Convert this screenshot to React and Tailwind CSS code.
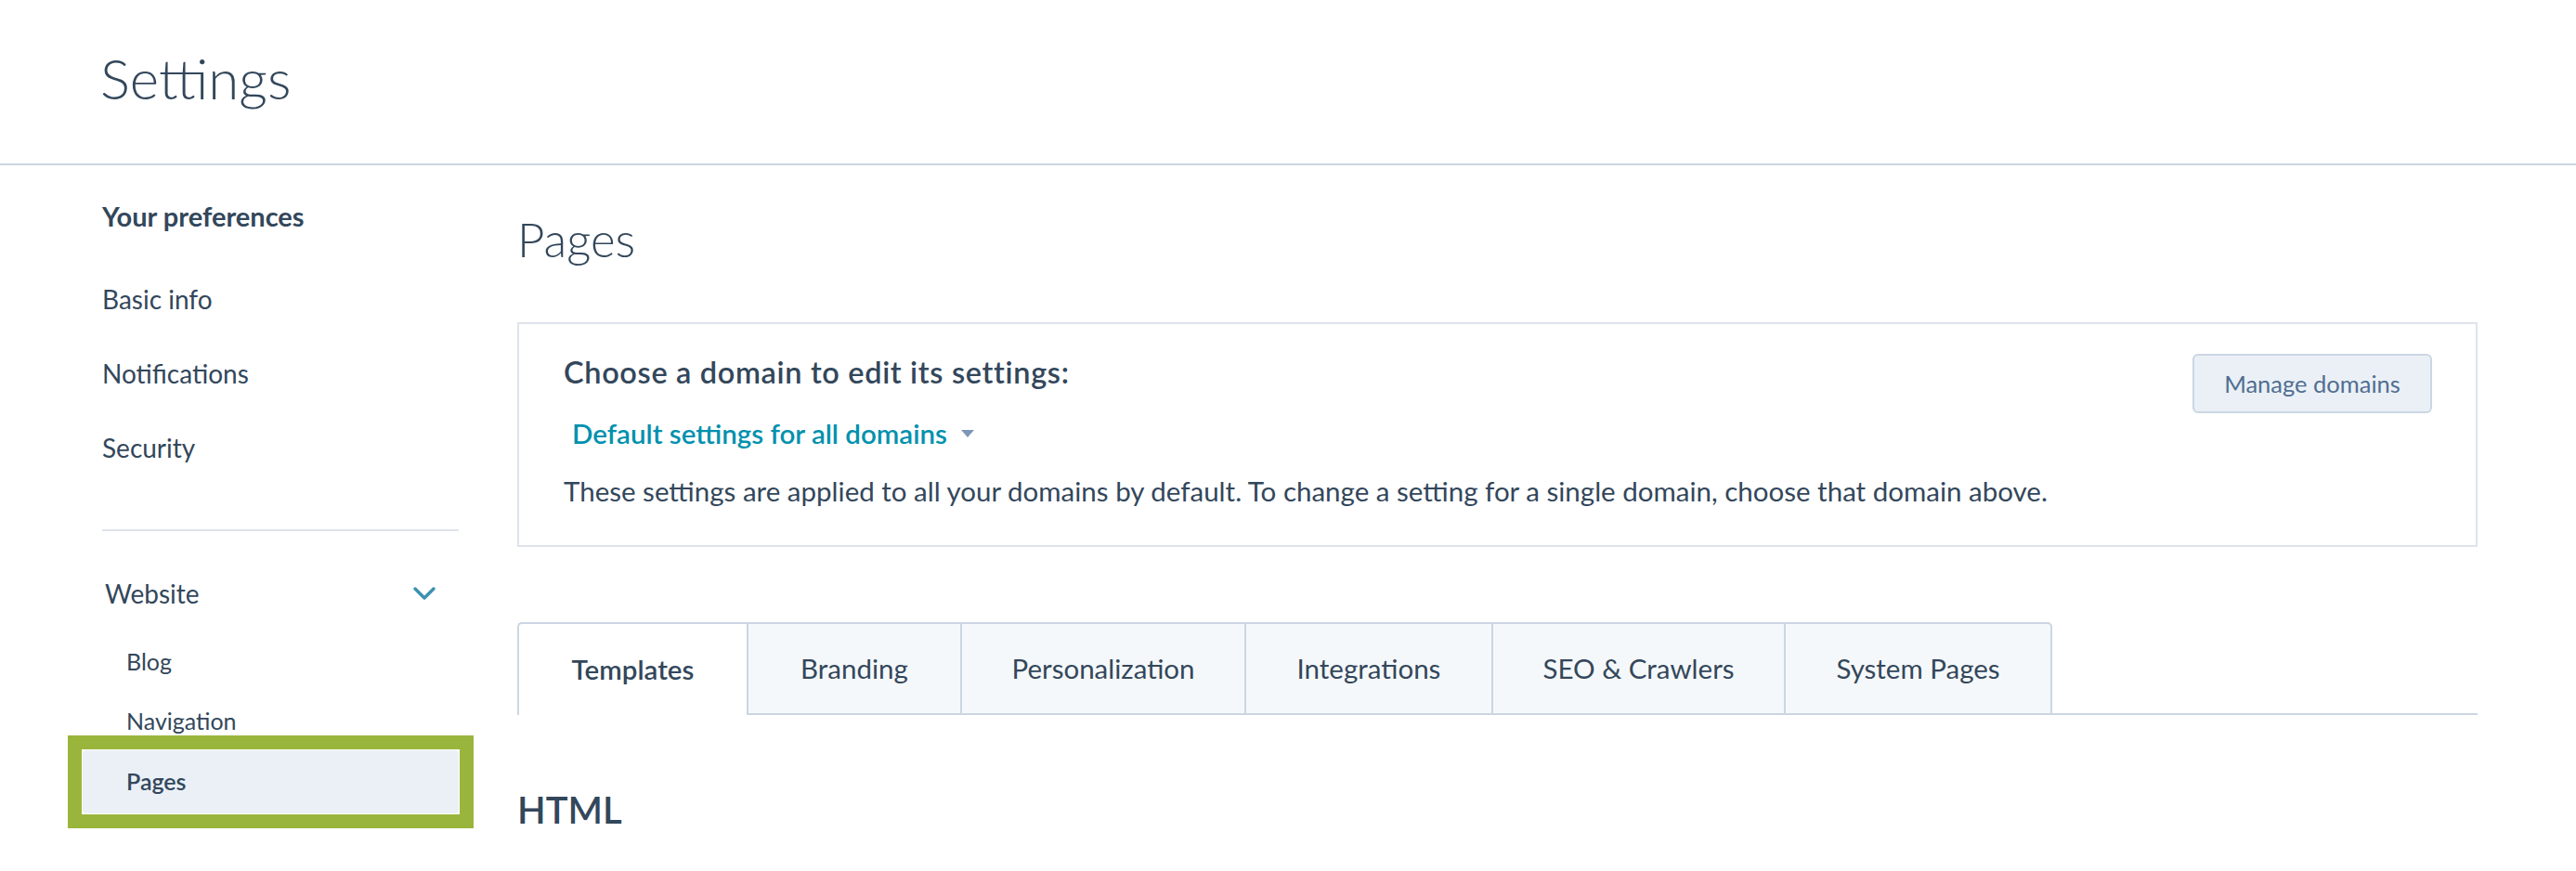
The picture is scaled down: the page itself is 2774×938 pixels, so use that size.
import React from 'react';

const tabs = [
  { label: 'Templates', w: 'w-[247px]', active: true },
  { label: 'Branding', w: 'w-[230px]' },
  { label: 'Personalization', w: 'w-[306px]' },
  { label: 'Integrations', w: 'w-[266px]' },
  { label: 'SEO & Crawlers', w: 'w-[315px]' },
  { label: 'System Pages', w: 'w-[289px]', last: true },
];

const Chevron = () => (
  <svg width="26" height="16" viewBox="0 0 26 16" fill="none">
    <path d="M3 3l10 10L23 3" stroke="#3b92b0" strokeWidth="3.5" strokeLinecap="round" strokeLinejoin="round" />
  </svg>
);

const Caret = () => (
  <svg width="16" height="10" viewBox="0 0 16 10">
    <path d="M1 1h14L8 9z" fill="#7c98b6" />
  </svg>
);

const Sidebar = () => (
  <aside className="w-[494px] shrink-0 pl-[110px] pt-[15px] text-[28px]">
    <div className="h-[80px] flex items-center font-bold text-[29px]">Your preferences</div>
    <div className="mt-[9px]">
      {['Basic info', 'Notifications', 'Security'].map(item => (
        <div key={item} className="h-[80px] flex items-center">{item}</div>
      ))}
    </div>
    <div className="mt-[48px] h-[2px] bg-[#dfe3eb]" />

    {/* Website group */}
    <div className="mt-[32px] h-[70px] flex items-center justify-between pl-[3px] pr-[24px]">
      <span>Website</span>
      <Chevron />
    </div>
    <div className="mt-[7px] -ml-[21px] text-[25px]">
      <div className="h-[64px] flex items-center pl-[47px]">Blog</div>
      <div className="h-[63px] flex items-center pl-[47px]">Navigation</div>
      {/* highlighted item, green annotation frame */}
      <div className="relative -mx-[16px] -my-[16px] border-[15px] border-[#9ab53c] p-[1px]">
        <div className="h-[68px] flex items-center pl-[47px] bg-[#eaf0f6] rounded-[4px] font-semibold">
          Pages
        </div>
      </div>
    </div>
  </aside>
);

export default function App() {
  return (
    <div className="w-full min-h-screen bg-white text-[#33475b] font-['Lato','Liberation_Sans',sans-serif] overflow-hidden">
      {/* Header */}
      <header className="h-[178px] flex items-center pl-[108px] border-b-2 border-[#cbd6e2]">
        <h1 className="text-[60px] font-light leading-none -mt-[8px]">Settings</h1>
      </header>

      <div className="flex">
        <Sidebar />

        <main className="flex-1 ml-[63px] mr-[106px]">
          <h2 className="mt-[50px] text-[51px] font-light leading-[60px]">Pages</h2>

          {/* Domain chooser */}
          <section className="mt-[59px] border-2 border-[#dfe3eb] pl-[48px] pr-[47px] pt-[32px] pb-[38px] flex justify-between items-start">
            <div>
              <div className="h-[40px] flex items-center text-[32.5px] font-semibold tracking-[0.02em]">Choose a domain to edit its settings:</div>
              <button className="mt-[26px] h-[40px] ml-[9px] flex items-center gap-[14px] text-[29.5px] font-semibold text-[#0091ae]">
                Default settings for all domains
                <Caret />
              </button>
              <p className="mt-[22px] h-[40px] flex items-center text-[29.5px]">
                These settings are applied to all your domains by default. To change a setting for a single domain, choose that domain above.
              </p>
            </div>
            <button className="w-[258px] h-[64px] rounded-[6px] border-2 border-[#cbd6e2] bg-[#eaf0f6] text-[#506e91] text-[25.5px]">
              Manage domains
            </button>
          </section>

          {/* Tabs */}
          <div className="mt-[81px] flex h-[100px] text-[29.5px]">
            {tabs.map(t => (
              <div
                key={t.label}
                className={`${t.w} flex items-center justify-center border-t-2 border-l-2 border-[#cbd6e2] ${
                  t.active ? 'bg-white rounded-tl-[5px] font-semibold' : 'bg-[#f5f8fa] border-b-2'
                } ${t.last ? 'border-r-2 rounded-tr-[5px]' : ''}`}
              >
                {t.label}
              </div>
            ))}
            <div className="flex-1 border-b-2 border-[#cbd6e2]" />
          </div>

          <h3 className="mt-[77px] h-[50px] flex items-center text-[40px] font-semibold">HTML</h3>
        </main>
      </div>
    </div>
  );
}
